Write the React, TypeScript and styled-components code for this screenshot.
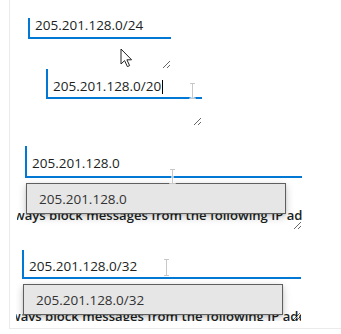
import React from 'react';
import styled, { createGlobalStyle } from 'styled-components';

const GlobalStyle = createGlobalStyle`
  html, body {
    margin: 0;
    padding: 0;
    background: #ffffff;
    font-family: "Open Sans", "Noto Sans", sans-serif;
  }
`;

const Panel = styled.div`
  box-sizing: border-box;
  margin-left: 9px;
  height: 329px;
  padding-top: 18px;
  border-left: 1px solid #ebebeb;
  border-bottom: 1px solid #ebebeb;
  display: flex;
  flex-direction: column;
  align-items: flex-start;
`;

const Frame = styled.div<{ $left: number; $top: number; $w: number; $h: number }>`
  position: relative;
  box-sizing: border-box;
  margin-left: ${(p) => p.$left}px;
  margin-top: ${(p) => p.$top}px;
  width: ${(p) => p.$w}px;
  height: ${(p) => p.$h}px;
  overflow: hidden;
  resize: both;
`;

const Field = styled.div<{ $h: number; $pt: number; $lh: number; $inset?: number }>`
  box-sizing: border-box;
  height: ${(p) => p.$h}px;
  margin-left: ${(p) => p.$inset ?? 0}px;
  padding: ${(p) => p.$pt}px 0 0 5px;
  border-left: 2px solid #0078d4;
  border-bottom: 2px solid #0078d4;
  font-size: 13.5px;
  line-height: ${(p) => p.$lh}px;
  color: #201f1e;
  white-space: nowrap;
`;

const Caret = styled.span`
  display: inline-block;
  width: 1px;
  height: 14px;
  margin-left: 1px;
  background: #000;
  vertical-align: -3px;
`;

const Suggestion = styled.div<{ $left: number; $top: number }>`
  position: absolute;
  z-index: 2;
  left: ${(p) => p.$left}px;
  top: ${(p) => p.$top}px;
  box-sizing: border-box;
  width: 260px;
  height: 31px;
  padding-left: 12px;
  display: flex;
  align-items: center;
  background: #e6e6e6;
  border: 1px solid #5f5f5f;
  box-shadow: 0 3px 8px rgba(0, 0, 0, 0.22), 0 1px 2px rgba(0, 0, 0, 0.12);
  font-size: 13.5px;
  line-height: 18px;
  color: #333;
`;

const Label = styled.div<{ $shift: number }>`
  margin-top: 27px;
  font-size: 13.1px;
  font-weight: 600;
  line-height: 20px;
  color: #201f1e;
  white-space: nowrap;
  text-indent: ${(p) => p.$shift}px;
`;

const Overlay = styled.svg<{ $left: number; $top: number }>`
  position: absolute;
  z-index: 3;
  left: ${(p) => p.$left}px;
  top: ${(p) => p.$top}px;
`;

const Pointer = ({ left, top }: { left: number; top: number }) => (
  <Overlay $left={left} $top={top} width="13" height="20" viewBox="0 0 13 20">
    <path
      d="M1 1 L1 16 L4.6 12.6 L7.4 18.6 L9.6 17.6 L6.9 11.8 L11.6 11.8 Z"
      fill="#fff"
      stroke="#222"
      strokeWidth="1"
      strokeLinejoin="round"
    />
  </Overlay>
);

const TextBeam = ({ left, top, h = 16 }: { left: number; top: number; h?: number }) => (
  <Overlay $left={left} $top={top} width="7" height={h} viewBox={`0 0 7 ${h}`}>
    <path
      d={`M0.5 0.5 H6.5 M3.5 0.5 V${h - 0.5} M0.5 ${h - 0.5} H6.5`}
      stroke="#ffffff"
      strokeWidth="2.2"
      fill="none"
    />
    <path
      d={`M1 0.5 H6 M3.5 0.5 V${h - 0.5} M1 ${h - 0.5} H6`}
      stroke="#c8c8c8"
      strokeWidth="1"
      fill="none"
    />
  </Overlay>
);

const hint = 'ways block messages from the following IP addresses';

export default function App() {
  return (
    <>
      <GlobalStyle />
      <Panel>
        <Frame $left={18} $top={0} $w={143} $h={51}>
          <Field $h={21} $pt={0} $lh={14}>205.201.128.0/24</Field>
          <Pointer left={92} top={30} />
        </Frame>

        <Frame $left={36} $top={0} $w={156} $h={57}>
          <Field $h={30} $pt={8} $lh={18}>
            205.201.128.0/20
            <Caret />
          </Field>
          <TextBeam left={143} top={14} />
        </Frame>

        <Frame $left={7} $top={20} $w={285} $h={84}>
          <Field $h={32} $pt={8} $lh={18} $inset={8}>205.201.128.0</Field>
          <TextBeam left={152} top={23} h={15} />
          <Suggestion $left={9} $top={37}>205.201.128.0</Suggestion>
          <Label $shift={-3}>{hint}</Label>
        </Frame>

        <Frame $left={6} $top={20} $w={285} $h={71}>
          <Field $h={29} $pt={7} $lh={18} $inset={6}>205.201.128.0/32</Field>
          <TextBeam left={147} top={9} h={17} />
          <Suggestion $left={7} $top={34}>205.201.128.0/32</Suggestion>
          <Label $shift={-6}>{hint}</Label>
        </Frame>
      </Panel>
    </>
  );
}
